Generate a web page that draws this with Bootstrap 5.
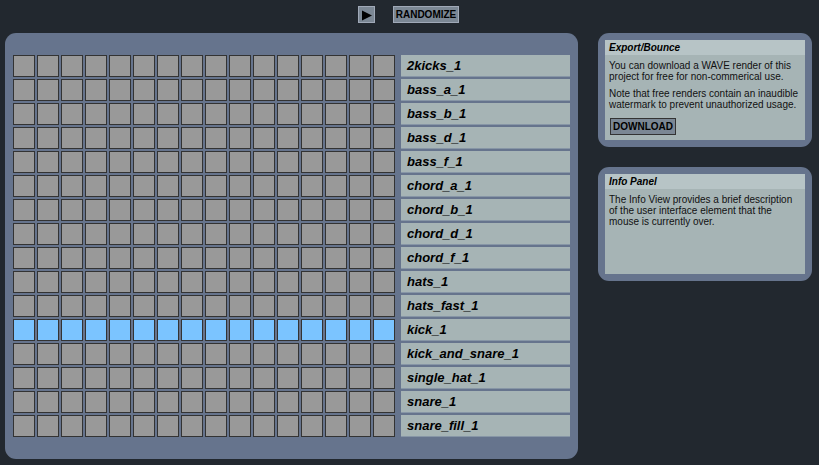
<!DOCTYPE html>
<html lang="en">
<head>
<meta charset="utf-8">
<meta name="viewport" content="width=device-width, initial-scale=1">
<title>Loop Sequencer</title>
<link href="https://cdn.jsdelivr.net/npm/bootstrap@5.3.0/dist/css/bootstrap.min.css" rel="stylesheet">
<style>
  body { background: #22282f; color: #000; font-family: "Liberation Sans", Arial, sans-serif; font-size: 10px; line-height: 11px; }
  .toolbar { gap: 18px; padding: 6px 2px 10px 0; }
  .tool-btn { --bs-btn-bg: #7b8794; --bs-btn-hover-bg: #8c98a5; --bs-btn-active-bg: #697582; --bs-btn-color: #000; --bs-btn-hover-color: #000;
    --bs-btn-border-color: #a0a9b8; --bs-btn-hover-border-color: #c0c8d2; --bs-btn-border-radius: 0;
    --bs-btn-padding-x: 2px; --bs-btn-padding-y: 2px; --bs-btn-font-size: 10px; --bs-btn-font-weight: 700; --bs-btn-line-height: 13px;
    height: 17px; padding-top: 1px; }
  .tool-btn.dark-edge { --bs-btn-border-color: #333; }
  .play-btn { width: 17px; }
  .play-btn svg { display: block; margin: 1px 0 0; }
  .workspace { gap: 20px; padding: 0 7px 6px 5px; }
  .panel { background: #66748d; border-radius: 11px; }
  .sequencer { padding: 22px 8px; }
  .tracks { gap: 2px; }
  .track { gap: 6px; }
  .steps { gap: 2px; }
  .step { appearance: none; width: 22px; height: 22px; margin: 0; background: #999; border: 1px solid #333; cursor: pointer; }
  .step:checked { background: #7bc4ff; }
  .track-name { height: 22px; padding-left: 6px; background: #a6b4b5; border-bottom: 1px solid #8796a6; font-size: 13px; line-height: 22px; font-weight: 700; font-style: italic; }
  .sidebar { width: 214px; gap: 20px; }
  .info-box { padding: 7px; }
  .info-body { min-height: 100px; background: #a6b4b5; }
  .info-title { margin: 0; padding: 0 4px; background: #b7c4c6; font-size: 10px; line-height: 15px; font-weight: 700; font-style: italic; }
  .info-text { padding: 5px 4px; color: #111; }
  .info-text p { margin-bottom: 6px; }
  .download-row { padding: 2px 1px 0; }
</style>
</head>
<body>
<header class="toolbar d-flex justify-content-center">
  <button type="button" class="btn tool-btn play-btn" aria-label="Play">
    <svg width="11" height="12" viewBox="0 0 11 12" aria-hidden="true"><path d="M1 1.5 11 6.5 1 11.5Z" fill="#000"/></svg>
  </button>
  <button type="button" class="btn tool-btn">RANDOMIZE</button>
</header>
<main class="workspace d-flex align-items-start">
  <section class="panel sequencer flex-grow-1" aria-label="Sequencer">
    <div class="tracks d-flex flex-column" id="tracks"></div>
  </section>
  <aside class="sidebar d-flex flex-column flex-shrink-0">
    <section class="panel info-box">
      <div class="info-body">
        <h2 class="info-title">Export/Bounce</h2>
        <div class="info-text">
          <p>You can download a WAVE render of this project for free for non-commerical use.</p>
          <p>Note that free renders contain an inaudible watermark to prevent unauthorized usage.</p>
          <div class="download-row d-flex"><button type="button" class="btn tool-btn dark-edge">DOWNLOAD</button></div>
        </div>
      </div>
    </section>
    <section class="panel info-box">
      <div class="info-body">
        <h2 class="info-title">Info Panel</h2>
        <div class="info-text">
          <p>The Info View provides a brief description of the user interface element that the mouse is currently over.</p>
        </div>
      </div>
    </section>
  </aside>
</main>
<script src="https://cdn.jsdelivr.net/npm/bootstrap@5.3.0/dist/js/bootstrap.bundle.min.js"></script>
<script>
  const names = ["2kicks_1", "bass_a_1", "bass_b_1", "bass_d_1", "bass_f_1", "chord_a_1", "chord_b_1", "chord_d_1",
    "chord_f_1", "hats_1", "hats_fast_1", "kick_1", "kick_and_snare_1", "single_hat_1", "snare_1", "snare_fill_1"];
  const active = "kick_1";
  const tracks = document.getElementById("tracks");
  for (const name of names) {
    const row = document.createElement("div");
    row.className = "track d-flex";
    const steps = document.createElement("div");
    steps.className = "steps d-flex flex-shrink-0";
    for (let i = 1; i <= 16; i++) {
      const step = document.createElement("input");
      step.type = "checkbox";
      step.className = "step";
      step.checked = name === active;
      step.setAttribute("aria-label", `${name} step ${i}`);
      steps.append(step);
    }
    const label = document.createElement("div");
    label.className = "track-name flex-grow-1";
    label.textContent = name;
    row.append(steps, label);
    tracks.append(row);
  }
</script>
</body>
</html>
